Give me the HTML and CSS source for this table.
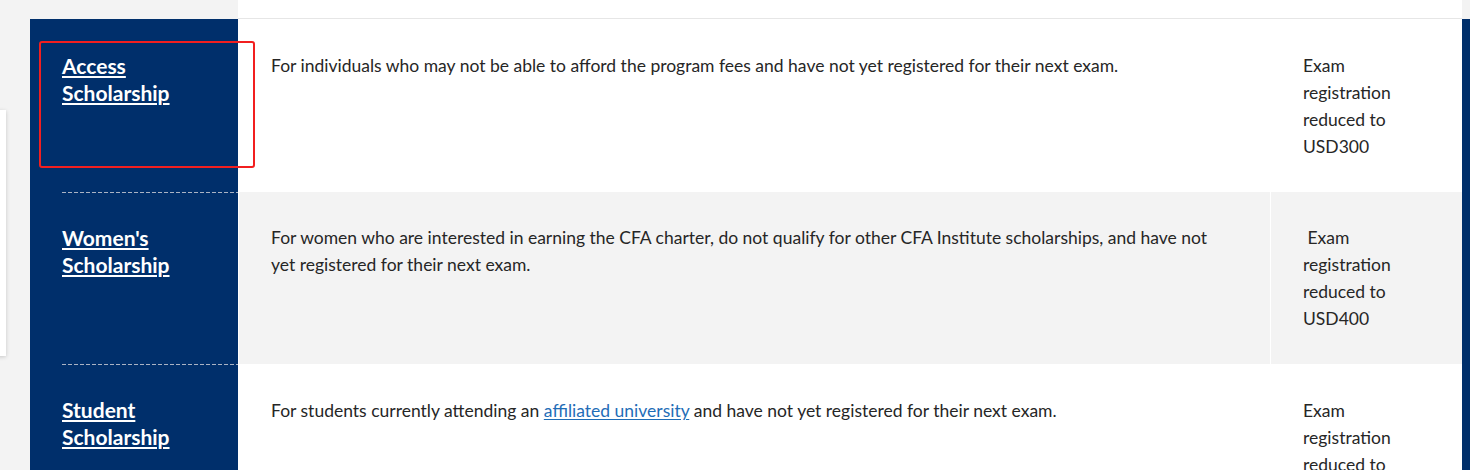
FILE: index.html
```html
<!DOCTYPE html>
<html lang="en">
<head>
<meta charset="utf-8">
<title>Scholarships</title>
<link rel="stylesheet" href="styles.css">
</head>
<body>
<div class="page">
  <div class="side-card"></div>
  <div class="main">
    <div class="prev-row">
      <div class="prev-head"></div>
      <div class="prev-body"></div>
      <div class="prev-end"></div>
    </div>
    <div class="table">
      <div class="row">
        <div class="head"><a href="#" class="head-link">Access Scholarship</a></div>
        <div class="desc">For individuals who may not be able to afford the program fees and have not yet registered for their next exam.</div>
        <div class="price">Exam registration reduced to USD300</div>
      </div>
      <div class="row row-alt">
        <div class="head head-dashed"><a href="#" class="head-link">Women's Scholarship</a></div>
        <div class="desc">For women who are interested in earning the CFA charter, do not qualify for other CFA Institute scholarships, and have not yet registered for their next exam.</div>
        <div class="price">&nbsp;Exam registration reduced to USD400</div>
      </div>
      <div class="row">
        <div class="head head-dashed"><a href="#" class="head-link">Student Scholarship</a></div>
        <div class="desc">For students currently attending an <a href="#" class="inline-link">affiliated university</a> and have not yet registered for their next exam.</div>
        <div class="price">Exam registration reduced to USD500</div>
      </div>
    </div>
  </div>
  <div class="highlight"></div>
</div>
</body>
</html>
```

FILE: styles.css
```css
* { box-sizing: border-box; }

html, body {
  margin: 0;
  padding: 0;
  background: #f3f3f3;
  font-family: Lato, "Open Sans", sans-serif;
  color: #262626;
  overflow: hidden;
}

.page {
  position: relative;
  width: 1470px;
  height: 470px;
  padding-left: 30px;
}

.side-card {
  position: absolute;
  left: -20px;
  top: 110px;
  width: 26px;
  height: 246px;
  background: #ffffff;
  box-shadow: 0 1px 4px rgba(0, 0, 0, 0.18);
}

.main {
  width: 1440px;
}

.prev-row {
  display: flex;
  height: 19px;
}

.prev-head {
  width: 208px;
  background: #f3f3f3;
}

.prev-body {
  width: 1224px;
  background: #ffffff;
  border-bottom: 1px solid #e6e6e6;
}

.prev-end {
  width: 8px;
  background: #f3f3f3;
}

.table {
  background: #002f6b;
  padding-right: 8px;
}

.row {
  display: flex;
  font-size: 17.5px;
  line-height: 27px;
}

.head {
  flex: none;
  margin-left: 32px;
  padding: 33px 12px 32px 0;
  width: 176px;
  font-size: 21px;
  line-height: 27px;
}

.head-dashed {
  padding-top: 32px;
  background-image: repeating-linear-gradient(to right, #aab3c4 0 4px, transparent 4px 6px);
  background-size: 100% 1px;
  background-repeat: no-repeat;
  background-position: top left;
}

.head-link {
  color: #ffffff;
  font-weight: 700;
  text-decoration: underline;
  text-decoration-thickness: 2px;
  text-underline-offset: 2px;
}

.desc {
  flex: 1;
  background: #ffffff;
  border-left: 1px solid #ffffff;
  padding: 33px 40px 32px 32px;
}

.price {
  width: 192px;
  flex: none;
  background: #ffffff;
  border-left: 1px solid #ffffff;
  padding: 33px 32px 32px 32px;
}

.row-alt .desc,
.row-alt .price {
  background: #f3f3f3;
}

.row-alt .desc,
.row-alt .price,
.row-alt .head {
  padding-top: 32px;
}

.inline-link {
  color: #1f6db7;
  text-decoration: underline;
  text-underline-offset: 2px;
}

.highlight {
  position: absolute;
  left: 39px;
  top: 41px;
  width: 216px;
  height: 127px;
  border: 2px solid #f21f1f;
  border-radius: 3px;
}
```
